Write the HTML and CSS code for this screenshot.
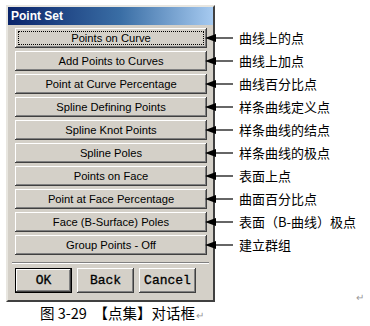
FILE: index.html
```html
<!DOCTYPE html>
<html lang="zh-CN">
<head>
    <meta charset="UTF-8">
    <title>Point Set</title>
    <link rel="stylesheet" href="styles.css">
</head>
<body>
    <div class="page">
        <div class="figure">
            <div class="dialog">
                <div class="titlebar">Point Set</div>
                <div class="option-list">
                    <button class="opt focused"><span>Points on Curve</span></button>
                    <button class="opt"><span>Add Points to Curves</span></button>
                    <button class="opt"><span>Point at Curve Percentage</span></button>
                    <button class="opt"><span>Spline Defining Points</span></button>
                    <button class="opt"><span>Spline Knot Points</span></button>
                    <button class="opt"><span>Spline Poles</span></button>
                    <button class="opt"><span>Points on Face</span></button>
                    <button class="opt"><span>Point at Face Percentage</span></button>
                    <button class="opt"><span>Face (B-Surface) Poles</span></button>
                    <button class="opt"><span>Group Points - Off</span></button>
                </div>
                <div class="separator"></div>
                <div class="actions">
                    <button class="act default">OK</button>
                    <button class="act">Back</button>
                    <button class="act">Cancel</button>
                </div>
            </div>

            <ul class="notes">
                <li><svg class="arrow" width="28" height="10" viewBox="0 0 28 10"><path d="M0 5 L11 1 L11 9 Z" fill="#000"/><line x1="10" y1="5" x2="28" y2="5" stroke="#000" stroke-width="1.2"/></svg><span>曲线上的点</span></li>
                <li><svg class="arrow" width="28" height="10" viewBox="0 0 28 10"><path d="M0 5 L11 1 L11 9 Z" fill="#000"/><line x1="10" y1="5" x2="28" y2="5" stroke="#000" stroke-width="1.2"/></svg><span>曲线上加点</span></li>
                <li><svg class="arrow" width="28" height="10" viewBox="0 0 28 10"><path d="M0 5 L11 1 L11 9 Z" fill="#000"/><line x1="10" y1="5" x2="28" y2="5" stroke="#000" stroke-width="1.2"/></svg><span>曲线百分比点</span></li>
                <li><svg class="arrow" width="28" height="10" viewBox="0 0 28 10"><path d="M0 5 L11 1 L11 9 Z" fill="#000"/><line x1="10" y1="5" x2="28" y2="5" stroke="#000" stroke-width="1.2"/></svg><span>样条曲线定义点</span></li>
                <li><svg class="arrow" width="28" height="10" viewBox="0 0 28 10"><path d="M0 5 L11 1 L11 9 Z" fill="#000"/><line x1="10" y1="5" x2="28" y2="5" stroke="#000" stroke-width="1.2"/></svg><span>样条曲线的结点</span></li>
                <li><svg class="arrow" width="28" height="10" viewBox="0 0 28 10"><path d="M0 5 L11 1 L11 9 Z" fill="#000"/><line x1="10" y1="5" x2="28" y2="5" stroke="#000" stroke-width="1.2"/></svg><span>样条曲线的极点</span></li>
                <li><svg class="arrow" width="28" height="10" viewBox="0 0 28 10"><path d="M0 5 L11 1 L11 9 Z" fill="#000"/><line x1="10" y1="5" x2="28" y2="5" stroke="#000" stroke-width="1.2"/></svg><span>表面上点</span></li>
                <li><svg class="arrow" width="28" height="10" viewBox="0 0 28 10"><path d="M0 5 L11 1 L11 9 Z" fill="#000"/><line x1="10" y1="5" x2="28" y2="5" stroke="#000" stroke-width="1.2"/></svg><span>曲面百分比点</span></li>
                <li><svg class="arrow" width="28" height="10" viewBox="0 0 28 10"><path d="M0 5 L11 1 L11 9 Z" fill="#000"/><line x1="10" y1="5" x2="28" y2="5" stroke="#000" stroke-width="1.2"/></svg><span>表面（B-曲线）极点</span></li>
                <li><svg class="arrow" width="28" height="10" viewBox="0 0 28 10"><path d="M0 5 L11 1 L11 9 Z" fill="#000"/><line x1="10" y1="5" x2="28" y2="5" stroke="#000" stroke-width="1.2"/></svg><span>建立群组</span></li>
                <li class="para-mark">↵</li>
            </ul>
        </div>
        <p class="caption">图 3-29 &nbsp;【点集】对话框<span class="mark">↵</span></p>
    </div>
</body>
</html>
```

FILE: styles.css
```css
body {
    margin: 0;
    background-color: #fff;
    font-family: "Liberation Sans", Arial, sans-serif;
}

.page {
    padding: 5px 0 0 6px;
}

.figure {
    display: flex;
    align-items: stretch;
}

/* Windows classic dialog */
.dialog {
    width: 209px;
    box-sizing: border-box;
    background-color: #d4d0c8;
    border: 2px solid;
    border-color: #e8e6e0 #404040 #404040 #e8e6e0;
    padding-bottom: 7px;
    flex-shrink: 0;
}

.titlebar {
    height: 18px;
    line-height: 18px;
    padding-left: 3px;
    color: #fff;
    font-weight: bold;
    font-size: 12px;
    background: linear-gradient(to right, #0a246a, #3a6ea5 55%, #a6caf0);
}

.option-list {
    display: flex;
    flex-direction: column;
    gap: 3px;
    padding: 3px 6px 0 7px;
}

.opt {
    height: 20px;
    margin: 0;
    padding: 0;
    border: none;
    background-color: #d4d0c8;
    box-shadow: inset -1px -1px #404040, inset 1px 1px #fff, inset -2px -2px #808080;
    font-family: "Liberation Sans", Arial, sans-serif;
    font-size: 11.2px;
    color: #000;
}

.opt span {
    display: block;
    line-height: 20px;
}

.opt.focused span {
    margin: 3px;
    line-height: 12px;
    border: 1px dotted #000;
}

.separator {
    margin: 7px 4px 0 4px;
    border-top: 1px solid #808080;
    border-bottom: 1px solid #fff;
}

.actions {
    display: flex;
    gap: 5px;
    padding: 4px 0 0 7px;
}

.act {
    width: 57px;
    height: 25px;
    margin: 0;
    padding: 0;
    border: none;
    background-color: #d4d0c8;
    box-shadow: inset -1px -1px #404040, inset 1px 1px #fff, inset -2px -2px #808080;
    font-family: "Liberation Mono", "Courier New", monospace;
    font-size: 13px;
    color: #000;
    -webkit-text-stroke: 0.3px #000;
}

.act.default {
    box-shadow: inset 0 0 0 1px #000, inset -2px -2px #404040, inset 2px 2px #fff, inset -3px -3px #808080;
}

/* callout labels */
.notes {
    list-style: none;
    margin: 0 0 0 -10px;
    padding: 21px 0 0 0;
    display: flex;
    flex-direction: column;
    flex: 1;
}

.notes li {
    height: 23px;
    display: flex;
    align-items: center;
    gap: 6px;
    font-family: "Noto Sans CJK SC", sans-serif;
    font-size: 13px;
    color: #000;
}

.arrow {
    flex-shrink: 0;
}

.notes .para-mark {
    margin-top: auto;
    height: 12px;
    align-self: flex-end;
    padding-right: 6px;
    font-size: 10px;
    color: #999;
}

.caption {
    margin: 2px 0 0 34px;
    font-family: "Noto Sans CJK SC", sans-serif;
    font-size: 14.5px;
    line-height: 18px;
    color: #000;
}

.caption .mark {
    font-size: 10px;
    color: #999;
    margin-left: 1px;
}
```
